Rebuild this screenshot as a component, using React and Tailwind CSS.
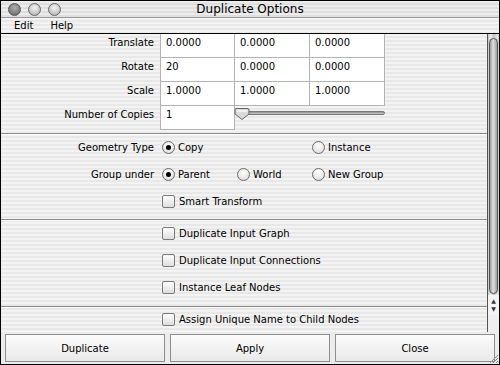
import React from "react";

const stripes =
  "bg-[repeating-linear-gradient(180deg,#f3f3f3_0px,#f3f3f3_2px,#e8e8e8_2px,#e8e8e8_4px)]";

function Radio({ checked }) {
  return (
    <span className="relative inline-flex h-[13px] w-[13px] shrink-0 items-center justify-center rounded-full border border-[#6b6b6b] bg-[radial-gradient(circle_at_50%_30%,#ffffff,#d8d8d8)]">
      {checked && <span className="h-[5px] w-[5px] rounded-full bg-black" />}
    </span>
  );
}

function Check() {
  return (
    <span className="inline-block h-[13px] w-[13px] shrink-0 rounded-[2px] border border-[#7a7a7a] bg-[linear-gradient(180deg,#ffffff,#dedede)]" />
  );
}

function Field({ value, first }) {
  return (
    <div
      className={`h-[24px] w-[75px] border-r border-b border-[#b4b4b4] bg-white pl-[5px] pt-[2px] leading-[14px] ${
        first ? "border-l" : ""
      }`}
    >
      {value}
    </div>
  );
}

function FieldRow({ label, values }) {
  return (
    <div className="flex h-[24px] items-start">
      <div className="w-[154px] pr-[1px] pt-[2px] text-right leading-[14px]">{label}</div>
      <div className="ml-[5px] flex">
        {values.map((v, i) => (
          <Field key={i} value={v} first={i === 0} />
        ))}
      </div>
    </div>
  );
}

function Sep() {
  return <div className="h-[1px] bg-[#8c8c8c] shadow-[0_1px_0_#ffffff]" />;
}

function CheckRow({ label, h = "h-[27px]" }) {
  return (
    <div className={`flex ${h} items-center pl-[161px]`}>
      <Check />
      <span className="ml-[4px]">{label}</span>
    </div>
  );
}

function Opt({ checked, label }) {
  return (
    <div className="flex w-[75px] items-center">
      <Radio checked={checked} />
      <span className="ml-[3px]">{label}</span>
    </div>
  );
}

export default function App() {
  return (
    <div className="h-[365px] w-[500px] overflow-hidden bg-white font-['DejaVu_Sans',sans-serif] text-[10px] text-black">
      <div className="flex h-[365px] w-[500px] flex-col border border-black">
        {/* title bar */}
        <div className="relative flex h-[17px] items-center justify-center border-b border-[#9a9a9a] bg-[repeating-linear-gradient(180deg,#ececec_0px,#ececec_2px,#dedede_2px,#dedede_4px)]">
          <div className="absolute left-[7px] top-[2px] flex gap-[7px]">
            <span className="h-[13px] w-[13px] rounded-full border border-[#555] bg-[radial-gradient(circle_at_50%_35%,#b0b0b0,#5e5e5e)]" />
            <span className="h-[13px] w-[13px] rounded-full border border-[#666] bg-[radial-gradient(circle_at_50%_35%,#f4f4f4,#a8a8a8)]" />
            <span className="h-[13px] w-[13px] rounded-full border border-[#666] bg-[radial-gradient(circle_at_50%_35%,#f4f4f4,#a8a8a8)]" />
          </div>
          <span className="text-[12px] leading-none">Duplicate Options</span>
        </div>
        {/* menu */}
        <div className={`flex h-[16px] items-center border-b border-black ${stripes} pl-[13px] text-[10px]`}>
          <span>Edit</span>
          <span className="ml-[17px]">Help</span>
        </div>
        {/* content */}
        <div className={`flex h-[298px] ${stripes}`}>
          <div className="flex flex-1 flex-col">
            <FieldRow label="Translate" values={["0.0000", "0.0000", "0.0000"]} />
            <FieldRow label="Rotate" values={["20", "0.0000", "0.0000"]} />
            <FieldRow label="Scale" values={["1.0000", "1.0000", "1.0000"]} />
            <div className="flex h-[24px] items-start">
              <div className="w-[154px] pr-[1px] pt-[2px] text-right leading-[14px]">
                Number of Copies
              </div>
              <div className="ml-[5px] flex">
                <Field value="1" first />
                <div className="relative h-[24px] w-[150px]">
                  <div className="absolute left-[2px] right-0 top-[5px] h-[4px] rounded-[2px] border border-[#777] bg-[linear-gradient(180deg,#8a8a8a,#d0d0d0)]" />
                  <svg className="absolute left-[-1px] top-[1px]" width="16" height="14" viewBox="0 0 16 14">
                    <path
                      d="M2 1.5 H14 Q15 1.5 15 3 V7 L8 12.5 L1 7 V3 Q1 1.5 2 1.5 Z"
                      fill="#d9d9d9"
                      stroke="#666"
                      strokeWidth="1"
                    />
                    <path d="M2.5 4 H13.5" stroke="#f8f8f8" strokeWidth="1.5" />
                  </svg>
                </div>
              </div>
            </div>
            <div className="h-[3px]" />
            <Sep />
            <div className="flex h-[27px] items-center">
              <div className="w-[154px] pr-[1px] text-right">Geometry Type</div>
              <div className="ml-[7px] flex">
                <Opt checked label="Copy" />
                <div className="w-[75px]" />
                <Opt label="Instance" />
              </div>
            </div>
            <div className="flex h-[27px] items-center">
              <div className="w-[154px] pr-[1px] text-right">Group under</div>
              <div className="ml-[7px] flex">
                <Opt checked label="Parent" />
                <Opt label="World" />
                <Opt label="New Group" />
              </div>
            </div>
            <CheckRow label="Smart Transform" />
            <div className="h-[4px]" />
            <Sep />
            <CheckRow label="Duplicate Input Graph" />
            <CheckRow label="Duplicate Input Connections" />
            <CheckRow label="Instance Leaf Nodes" />
            <div className="h-[5px]" />
            <Sep />
            <CheckRow label="Assign Unique Name to Child Nodes" h="h-[24px]" />
          </div>
          {/* scrollbar */}
          <div className="flex w-[12px] flex-col border-l border-[#555] bg-[repeating-linear-gradient(90deg,#c8c8c8_0px,#eeeeee_3px,#bdbdbd_6px,#e8e8e8_9px,#c8c8c8_11px)]">
            <div className="mx-[1px] mt-[4px] h-[256px] rounded-[5px] border border-[#555] bg-[linear-gradient(90deg,#9a9a9a,#e0e0e0_45%,#a0a0a0)]" />
            <div className="mt-[1px] flex h-[20px] flex-col items-center justify-center bg-[#f4f4f4] text-[6px] leading-[8px] text-[#333]">
              <span>▲</span>
              <span>▼</span>
            </div>
            <div className="flex-1 bg-[#efefef]" />
          </div>
        </div>
        {/* buttons */}
        <div className="relative flex flex-1 gap-[5px] bg-[#ececec] px-[4px] pt-[2px] pb-[2px]">
          {["Duplicate", "Apply", "Close"].map((b) => (
            <div
              key={b}
              className="flex flex-1 items-center justify-center border border-[#8e8e8e] bg-[linear-gradient(180deg,#fbfbfb,#e9e9e9)] text-[10px]"
            >
              {b}
            </div>
          ))}
          <svg className="absolute bottom-0 right-0" width="11" height="11" viewBox="0 0 11 11">
            <path d="M10 2 L2 10 M10 5 L5 10 M10 8 L8 10" stroke="#888" strokeWidth="1" />
          </svg>
        </div>
      </div>
    </div>
  );
}
